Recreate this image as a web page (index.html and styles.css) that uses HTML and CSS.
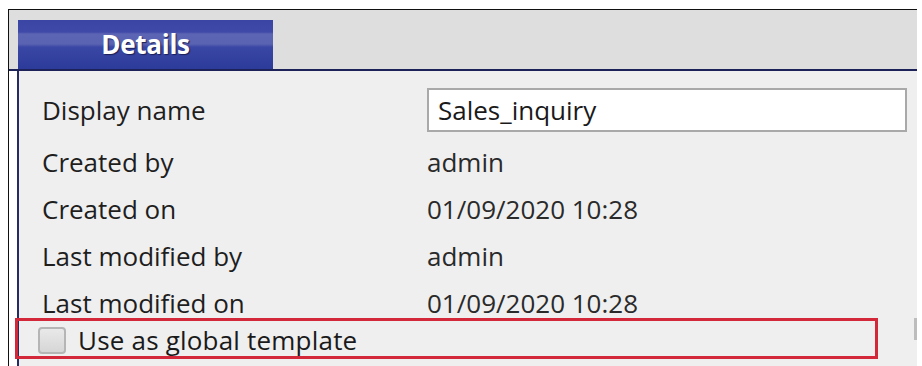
FILE: index.html
```html
<!DOCTYPE html>
<html>
<head>
<meta charset="utf-8">
<link rel="stylesheet" href="styles.css">
</head>
<body>
<div class="frame">
  <div class="tabstrip">
    <div class="tab">Details</div>
  </div>
  <div class="body">
    <div class="panel">
      <div class="row first">
        <div class="label">Display name</div>
        <div class="input">Sales_inquiry</div>
      </div>
      <div class="row">
        <div class="label">Created by</div>
        <div class="value">admin</div>
      </div>
      <div class="row">
        <div class="label">Created on</div>
        <div class="value">01/09/2020 10:28</div>
      </div>
      <div class="row">
        <div class="label">Last modified by</div>
        <div class="value">admin</div>
      </div>
      <div class="row short">
        <div class="label">Last modified on</div>
        <div class="value">01/09/2020 10:28</div>
      </div>
      <div class="check-row">
        <span class="checkbox"></span>
        <span class="check-label">Use as global template</span>
      </div>
    </div>
  </div>
</div>
<div class="highlight"></div>
<div class="edge-mark"></div>
</body>
</html>
```

FILE: styles.css
```css
html, body {
  margin: 0;
  padding: 0;
  background: #ffffff;
  width: 922px;
  height: 366px;
  overflow: hidden;
  font-family: "Open Sans", "Noto Sans", sans-serif;
}

.frame {
  margin: 9px 0 0 8px;
  width: 908px;
  border-top: 1px solid #111111;
  border-left: 1px solid #111111;
}

.tabstrip {
  background: #dedede;
  height: 49px;
  padding: 10px 0 0 9px;
  border-bottom: 2px solid #1d2258;
}

.tab {
  width: 255px;
  height: 49px;
  background: linear-gradient(to bottom,
    #3a45a4 0px, #3f4aa8 12px,
    #5c65b4 14px, #5a63b2 24px,
    #3a47a4 27px, #2c3a9a 49px);
  color: #ffffff;
  font-weight: 700;
  font-size: 26px;
  line-height: 48px;
  text-align: center;
  text-shadow: 1px 1px 1px #1a1f55;
  letter-spacing: -0.3px;
}

.body {
  padding-left: 8px;
  background: #ffffff;
}

.panel {
  border-left: 2px solid #262b66;
  background: #efefef;
  padding: 17px 11px 6px 23px;
  color: #1e1e1e;
  font-size: 26px;
}

.row {
  display: grid;
  grid-template-columns: 385px 480px;
  height: 47px;
  line-height: 47px;
  align-items: center;
}

.row.first {
  height: 44px;
  line-height: 44px;
  margin-bottom: 7px;
}

.row.short {
  height: 40px;
}

.input {
  box-sizing: border-box;
  height: 44px;
  line-height: 40px;
  background: #ffffff;
  border: 2px solid #a9a9a9;
  padding-left: 9px;
  color: #1a1a1a;
}

.value {
  color: #2a2a2a;
}

.check-row {
  display: flex;
  align-items: center;
  height: 40px;
  line-height: 40px;
  margin-left: -4px;
  letter-spacing: 0.2px;
}

.checkbox {
  box-sizing: border-box;
  width: 28px;
  height: 27px;
  border: 2px solid #b5b5b5;
  border-radius: 4px;
  background: linear-gradient(to bottom, #e9e9e9, #d6d6d6);
  margin-right: 12px;
}

.check-label {
  color: #1a1a1a;
}

.highlight {
  position: absolute;
  left: 15px;
  top: 318px;
  width: 857px;
  height: 35px;
  border: 3px solid #d3283a;
}

.edge-mark {
  position: absolute;
  left: 914px;
  top: 318px;
  width: 3px;
  height: 22px;
  background: #bdbdbd;
}
```
